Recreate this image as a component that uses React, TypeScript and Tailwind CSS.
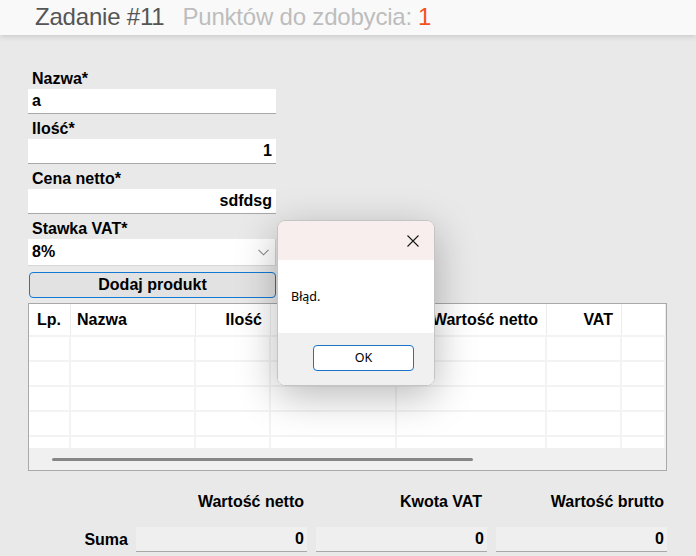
const cols = [
  { w: 'w-[42px]', label: 'Lp.', align: 'text-left pl-[8px]' },
  { w: 'w-[125px]', label: 'Nazwa', align: 'text-left pl-[6px]' },
  { w: 'w-[75px]', label: 'Ilość', align: 'text-right pr-[8px]' },
  { w: 'w-[126px]', label: 'Cena netto', align: 'text-right pr-[8px]' },
  { w: 'w-[150px]', label: 'Wartość netto', align: 'text-right pr-[8px]' },
  { w: 'w-[75px]', label: 'VAT', align: 'text-right pr-[8px]' },
  { w: 'flex-1', label: '', align: '' },
]

function TextField({
  label,
  value,
  right,
}: {
  label: string
  value: string
  right?: boolean
}) {
  return (
    <div className="flex flex-col">
      <div className="h-[25px] flex items-end pb-[1px] pl-[4px] leading-[18px]">
        {label}
      </div>
      <div
        className={`h-[25px] w-[248px] bg-white border-b border-[#a8a8a8] flex items-center px-[4px] ${
          right ? 'justify-end' : ''
        }`}>
        {value}
      </div>
    </div>
  )
}

export default function App() {
  return (
    <div className="relative w-[696px] h-[556px] overflow-hidden bg-[#e9e9e9] font-['Liberation_Sans',Arial,sans-serif]">
      {/* header */}
      <div className="h-[35px] bg-[#f9f9f9] shadow-[0_2px_5px_rgba(0,0,0,0.12)] flex items-center pl-[35px] text-[24px] tracking-[-0.2px] pb-[2px]">
        <span className="text-[#555]">Zadanie #11</span>
        <span className="ml-[18px] text-[#bdbdbd]">Punktów do zdobycia:</span>
        <span className="ml-[6px] text-[#f4511e]">1</span>
      </div>

      {/* form */}
      <div className="pl-[28px] mt-[29px] text-[16px] font-bold text-black">
        <TextField label="Nazwa*" value="a" />
        <TextField label="Ilość*" value="1" right />
        <TextField label="Cena netto*" value="sdfdsg" right />
        <div className="flex flex-col">
          <div className="h-[25px] flex items-end pb-[1px] pl-[4px] leading-[18px]">
            Stawka VAT*
          </div>
          <div className="h-[27px] w-[248px] bg-white border-b border-r border-[#d6d6d6] flex items-center justify-between pl-[4px] pr-[6px]">
            <span>8%</span>
            <svg width="11" height="7" viewBox="0 0 11 7" fill="none">
              <path d="M0.5 0.8 L5.5 5.8 L10.5 0.8" stroke="#8a8a8a" strokeWidth="1.1" />
            </svg>
          </div>
        </div>
        <button className="mt-[6px] ml-[1px] h-[26px] w-[247px] rounded-[4px] border border-[#1479d4] bg-[#e2e2e2] flex items-center justify-center">
          Dodaj produkt
        </button>

        {/* table */}
        <div className="mt-[5px] w-[639px] h-[168px] border border-[#a9a9a9] bg-white flex flex-col">
          <div className="h-[31px] flex shrink-0">
            {cols.map((c, i) => (
              <div
                key={i}
                className={`${c.w} h-full border-r border-[#ececec] leading-[31px] ${c.align}`}>
                {c.label}
              </div>
            ))}
          </div>
          {[0, 1, 2, 3].map((r) => (
            <div key={r} className="h-[25px] flex shrink-0 border-t-2 border-[#f3f3f3]">
              {cols.map((c, i) => (
                <div key={i} className={`${c.w} h-full border-r-2 border-[#f3f3f3]`} />
              ))}
            </div>
          ))}
          <div className="h-[13px] flex shrink-0 border-t-2 border-[#f3f3f3]">
            {cols.map((c, i) => (
              <div key={i} className={`${c.w} h-full border-r-2 border-[#f3f3f3]`} />
            ))}
          </div>
          <div className="flex-1 bg-[#f0f0f0] flex items-center pl-[23px]">
            <div className="h-[3px] w-[421px] rounded-full bg-[#878787]" />
          </div>
        </div>

        {/* totals */}
        <div className="mt-[22px] flex pl-[108px] gap-[9px] h-[18px] leading-[18px]">
          <div className="w-[171px] text-right pr-[3px]">Wartość netto</div>
          <div className="w-[171px] text-right pr-[5px]">Kwota VAT</div>
          <div className="w-[171px] text-right pr-[3px]">Wartość brutto</div>
        </div>
        <div className="mt-[16px] flex items-center">
          <div className="w-[100px] text-right">Suma</div>
          <div className="ml-[8px] flex gap-[9px]">
            {['0', '0', '0'].map((v, i) => (
              <div
                key={i}
                className="w-[171px] h-[25px] bg-[#efefef] border-b border-[#a8a8a8] flex items-center justify-end pr-[3px]">
                {v}
              </div>
            ))}
          </div>
        </div>
      </div>

      {/* message box */}
      <div className="absolute left-[277px] top-[220px] w-[158px] h-[166px] rounded-[8px] border border-[#c4c4c4] overflow-hidden shadow-[0_10px_40px_rgba(0,0,0,0.28)] flex flex-col font-['Noto_Sans',sans-serif] text-[12.5px] text-black">
        <div className="h-[39px] bg-[#f8eeee] flex items-center justify-end pr-[15px]">
          <svg width="12" height="12" viewBox="0 0 12 12" fill="none">
            <path d="M0.5 0.5 L11.5 11.5 M11.5 0.5 L0.5 11.5" stroke="#1a1a1a" strokeWidth="1.1" />
          </svg>
        </div>
        <div className="h-[73px] bg-white flex items-center pl-[13px] pt-[1px]">Błąd.</div>
        <div className="flex-1 bg-[#f0f0f0] pl-[35px] pt-[12px]">
          <div className="w-[101px] h-[26px] rounded-[4px] border border-[#1a73c7] bg-white flex items-center justify-center">
            OK
          </div>
        </div>
      </div>
    </div>
  )
}
